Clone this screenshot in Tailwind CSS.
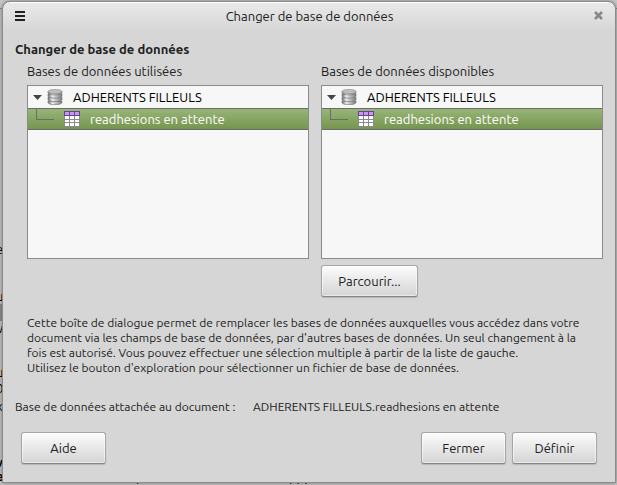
<!DOCTYPE html>
<html lang="fr">
<head>
<meta charset="utf-8">
<meta name="viewport" content="width=device-width,initial-scale=1">
<title>Changer de base de données</title>
<script src="https://cdn.jsdelivr.net/npm/@tailwindcss/browser@4"></script>
</head>
<body class="relative min-h-screen flex overflow-hidden bg-[#c4c4c4] font-['Ubuntu','Noto_Sans',sans-serif] text-[13px] leading-4 text-[#212121]">

  <!-- Document window behind the dialog -->
  <div aria-hidden="true" class="absolute inset-0 overflow-hidden text-black">
    <div class="h-[9px] border-b border-[#8b8b8b] bg-[#c9c9c9]"></div>
    <div class="absolute top-[304px] left-0 w-1 h-[17px] bg-[#8f8f8f]"></div>
    <span class="absolute top-[241px] -left-1">e</span>
    <span class="absolute top-[288px] -left-1">u</span>
    <span class="absolute top-[320px] -left-[7px]">w</span>
    <span class="absolute top-[364px] -left-1">u</span>
    <span class="absolute top-[380px] -left-1">0</span>
    <span class="absolute top-[398px] -left-1">x</span>
    <span class="absolute top-[454px] -left-1 font-bold">v</span>
    <span class="absolute top-[468px] -left-1 font-bold">e</span>
    <span class="absolute top-[469px] left-[136px]">p</span>
    <span class="absolute top-[469px] left-[289px]">ppp</span>
  </div>

  <!-- Shared icons -->
  <svg class="absolute size-0">
    <defs>
      <linearGradient id="metal" x1="0" x2="1">
        <stop offset="0" stop-color="#686868"/>
        <stop offset=".3" stop-color="#ededed"/>
        <stop offset="1" stop-color="#7c7c7c"/>
      </linearGradient>
    </defs>
    <symbol id="database" viewBox="0 0 16 16">
      <g fill="url(#metal)" stroke="#777" stroke-width=".7">
        <path d="M1 12v1.500c0 1.200 3 2.200 7 2.200s7-1 7-2.200V12z"/>
        <path d="M1 8.500v2c0 1.200 3 2.200 7 2.200s7-1 7-2.200v-2z"/>
        <path d="M1 5v2c0 1.200 3 2.200 7 2.200S15 8.200 15 7V5z"/>
        <path d="M1 2.500v1.200c0 1.200 3 2.200 7 2.200s7-1 7-2.200V2.500z"/>
      </g>
      <ellipse cx="8" cy="2.500" rx="7" ry="2.100" fill="#bdbdbd" stroke="#909090" stroke-width=".7"/>
    </symbol>
    <symbol id="table" viewBox="0 0 16 16">
      <path fill="#8a8a8a" d="M0 4h16v12H0z"/>
      <path fill="#6a3f96" d="M0 0h16v5H0z"/>
      <path fill="#c39be8" d="M1 1h4v3H1zM6 1h4v3H6zM11 1h4v3h-4z"/>
      <path fill="#fff" d="M1 5h4v3H1zM6 5h4v3H6zM11 5h4v3h-4zM1 9h4v2H1zM6 9h4v2H6zM11 9h4v2h-4zM1 12h4v3H1zM6 12h4v3H6zM11 12h4v3h-4z"/>
    </symbol>
  </svg>

  <main class="relative flex-1 flex flex-col mt-px ml-[2px] mr-px mb-[2px] rounded-t-lg border border-[#8b8b8b] bg-[#d6d6d6] shadow-[0_0_4px_#00000066,inset_0_1px_0_#fff]">
    <!-- Title bar -->
    <header class="flex items-center justify-between h-7 pb-[3px] pl-3 pr-3 mt-px rounded-t-lg bg-linear-to-b from-[#e9e9e9] to-[#d6d6d6]">
      <button aria-label="Menu">
        <svg class="w-[10px] h-[10px]" viewBox="0 0 10 10"><path fill="#212121" d="M0 0h10v2H0zM0 4h10v2H0zM0 8h10v2H0z"/></svg>
      </button>
      <h1>Changer de base de données</h1>
      <button aria-label="Fermer la fenêtre">
        <svg class="w-[9px] h-[9px]" viewBox="0 0 9 9"><path stroke="#888" stroke-width="2.600" d="M1 1l7 7M8 1L1 8"/></svg>
      </button>
    </header>

    <div class="flex-1 flex flex-col px-3 pt-[10px]">
      <h2 class="font-bold">Changer de base de données</h2>

      <div class="grid grid-cols-2 gap-3 pl-3 mt-[6px]">
        <section>
          <h3 id="used">Bases de données utilisées</h3>
          <ul role="tree" aria-labelledby="used" class="h-[174px] mt-[6px] border border-[#8b8b8b] bg-[#f7f7f7]">
            <li role="treeitem" class="text-black">
              <div class="flex items-center h-[22px] pl-[5px]">
                <svg class="w-[9px] h-[5px]" viewBox="0 0 9 5"><path fill="#444" d="M0 0h9L4.500 5z"/></svg>
                <svg class="w-4 h-4 ml-[5px] mr-[10px]"><use href="#database"/></svg>
                <span>ADHERENTS FILLEULS</span>
              </div>
              <ul role="group">
                <li role="treeitem" aria-selected="true" class="flex items-center h-[22px] pl-2 border-y border-[#6c6c6c] bg-linear-to-b from-[#97b577] to-[#76954f] text-white">
                  <span class="w-[18px] h-[11px] mb-[9px] border-l border-b border-[#6c6c6c]"></span>
                  <svg class="w-4 h-4 ml-[10px] mr-[10px]"><use href="#table"/></svg>
                  <span>readhesions en attente</span>
                </li>
              </ul>
            </li>
          </ul>
        </section>

        <section>
          <h3 id="available">Bases de données disponibles</h3>
          <ul role="tree" aria-labelledby="available" class="h-[174px] mt-[6px] border border-[#8b8b8b] bg-[#f7f7f7]">
            <li role="treeitem" class="text-black">
              <div class="flex items-center h-[22px] pl-[5px]">
                <svg class="w-[9px] h-[5px]" viewBox="0 0 9 5"><path fill="#444" d="M0 0h9L4.500 5z"/></svg>
                <svg class="w-4 h-4 ml-[5px] mr-[10px]"><use href="#database"/></svg>
                <span>ADHERENTS FILLEULS</span>
              </div>
              <ul role="group">
                <li role="treeitem" aria-selected="true" class="flex items-center h-[22px] pl-2 border-y border-[#6c6c6c] bg-linear-to-b from-[#97b577] to-[#76954f] text-white">
                  <span class="w-[18px] h-[11px] mb-[9px] border-l border-b border-[#6c6c6c]"></span>
                  <svg class="w-4 h-4 ml-[10px] mr-[10px]"><use href="#table"/></svg>
                  <span>readhesions en attente</span>
                </li>
              </ul>
            </li>
          </ul>
          <button class="mt-[6px] h-8 w-[97px] rounded-[3px] border border-[#a6a6a6] border-b-[#858585] bg-linear-to-b from-[#fcfcfc] to-[#d4d4d4] shadow-[inset_0_0_0_1px_#ffffff80,0_1px_1px_#00000026]">Parcourir...</button>
        </section>
      </div>

      <p class="pl-3 mt-[18px] text-[12px] leading-[15px] whitespace-nowrap">
        Cette boîte de dialogue permet de remplacer les bases de données auxquelles vous accédez dans votre<br>
        document via les champs de base de données, par d'autres bases de données. Un seul changement à la<br>
        fois est autorisé. Vous pouvez effectuer une sélection multiple à partir de la liste de gauche.<br>
        Utilisez le bouton d'exploration pour sélectionner un fichier de base de données.
      </p>

      <dl class="flex mt-6 text-[12px] leading-[15px]">
        <dt class="w-[238px] whitespace-nowrap">Base de données attachée au document :</dt>
        <dd>ADHERENTS FILLEULS.readhesions en attente</dd>
      </dl>

      <footer class="flex gap-[6px] mt-[18px] px-[6px]">
        <button class="mr-auto h-8 w-[85px] rounded-[3px] border border-[#a6a6a6] border-b-[#858585] bg-linear-to-b from-[#fcfcfc] to-[#d4d4d4] shadow-[inset_0_0_0_1px_#ffffff80,0_1px_1px_#00000026]">Aide</button>
        <button class="h-8 w-[85px] rounded-[3px] border border-[#a6a6a6] border-b-[#858585] bg-linear-to-b from-[#fcfcfc] to-[#d4d4d4] shadow-[inset_0_0_0_1px_#ffffff80,0_1px_1px_#00000026]">Fermer</button>
        <button class="h-8 w-[85px] rounded-[3px] border border-[#a6a6a6] border-b-[#858585] bg-linear-to-b from-[#fcfcfc] to-[#d4d4d4] shadow-[inset_0_0_0_1px_#ffffff80,0_1px_1px_#00000026]">Définir</button>
      </footer>
    </div>
  </main>
</body>
</html>
